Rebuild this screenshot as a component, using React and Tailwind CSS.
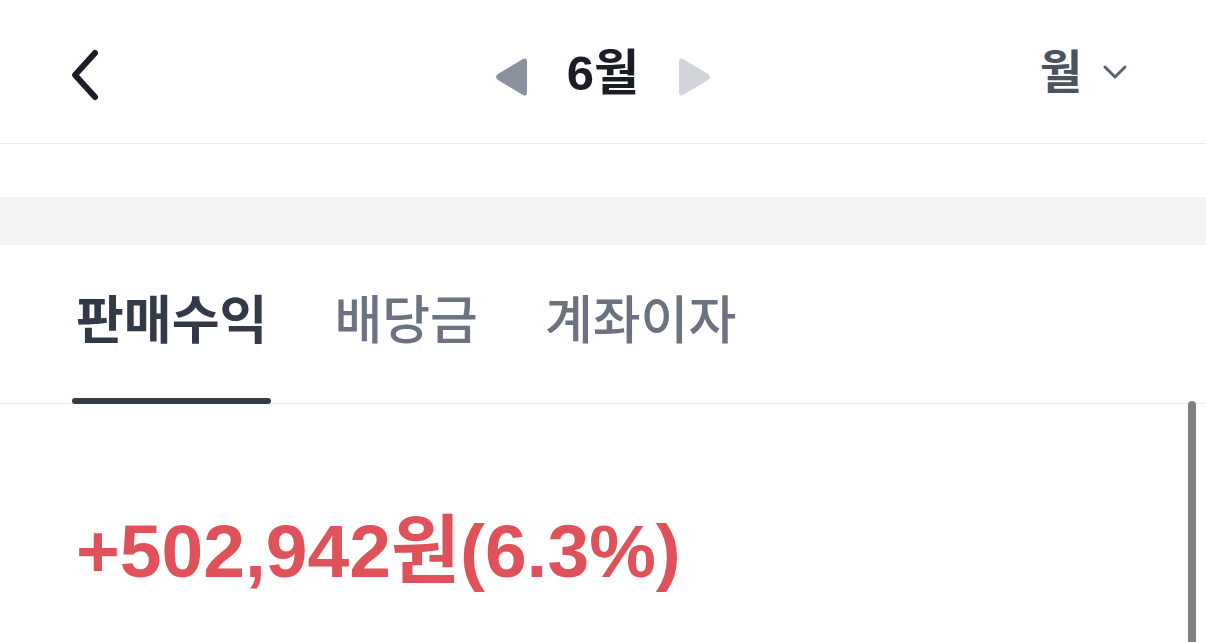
import { useState } from 'react';

const KR = { fontFamily: '"Liberation Sans", "Noto Sans CJK KR", sans-serif' };

const tabs = ['판매수익', '배당금', '계좌이자'];

function BackIcon() {
	return (
		<svg width="36" height="56" viewBox="0 0 36 56" fill="none">
			<path
				d="M29 5 L9 27 L29 49"
				stroke="#1b1e24"
				strokeWidth="6"
				strokeLinecap="round"
				strokeLinejoin="round"
			/>
		</svg>
	);
}

function Triangle({ dir, color }) {
	// rounded play-style arrow used for month stepping
	const d =
		dir === 'left'
			? 'M29 2 Q33 0 33 5 L33 35 Q33 40 29 38 L4 23 Q0 20 4 17 Z'
			: 'M4 2 Q0 0 0 5 L0 35 Q0 40 4 38 L29 23 Q33 20 29 17 Z';
	return (
		<svg width="33" height="40" viewBox="0 0 33 40" className="mt-[6px]">
			<path d={d} fill={color} />
		</svg>
	);
}

function ChevronDown() {
	return (
		<svg width="26" height="16" viewBox="0 0 26 16" fill="none">
			<path
				d="M3 3 L13 13 L23 3"
				stroke="#5c6370"
				strokeWidth="3"
				strokeLinecap="round"
				strokeLinejoin="round"
			/>
		</svg>
	);
}

export default function App() {
	const [active, setActive] = useState(0);

	return (
		<div className="h-[642px] w-[1206px] overflow-hidden bg-white relative" style={KR}>
			{/* top bar */}
			<header className="h-[144px] border-b border-[#ebebeb] flex items-center justify-between pl-[66px] pr-[78px]">
				<button className="pt-[8px]">
					<BackIcon />
				</button>
				<div className="flex items-center gap-[40px] ml-[64px] pt-[4px]">
					<Triangle dir="left" color="#8b919c" />
					<span className="text-[49px] font-bold text-[#1a1d23] leading-none">6월</span>
					<Triangle dir="right" color="#d1d4da" />
				</div>
				<div className="flex items-center gap-[20px]">
					<span className="text-[46px] font-bold text-[#4b5260] leading-none">월</span>
					<ChevronDown />
				</div>
			</header>

			<div className="h-[53px]" />
			<div className="h-[48px] bg-[#f2f3f5]" />

			{/* tabs */}
			<nav className="h-[159px] border-b border-[#e8e8e8] flex items-end pl-[72px] gap-[59px]">
				{tabs.map((t, i) => (
					<button
						key={t}
						onClick={() => setActive(i)}
						className="relative h-full flex items-center px-[4px] pb-[6px]"
					>
						<span
							className={
								'text-[52px] leading-none ' +
								(active === i ? 'font-bold text-[#333a47]' : 'font-medium text-[#6b7280]')
							}
						>
							{t}
						</span>
						{active === i && (
							<span className="absolute left-0 right-0 bottom-[-1px] h-[6px] rounded-full bg-[#343a46]" />
						)}
					</button>
				))}
			</nav>

			<div className="pl-[76px] pt-[110px]">
				<p className="text-[75px] font-bold leading-none text-[#e0525a]">
					+502,942원(6.3%)
				</p>
			</div>

			{/* scroll thumb */}
			<div className="absolute right-[10px] top-[401px] bottom-0 w-[8px] rounded-t-full bg-[#808080]" />
		</div>
	);
}
